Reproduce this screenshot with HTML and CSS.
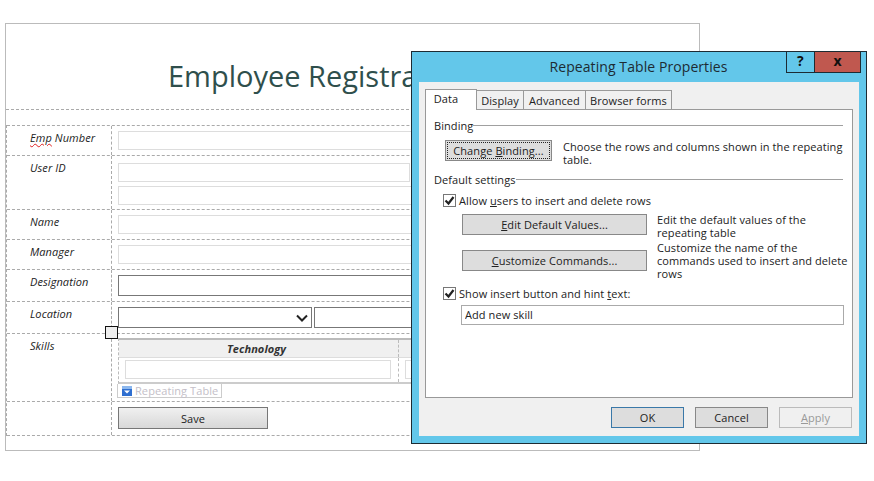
FILE: index.html
```html
<!DOCTYPE html>
<html lang="en">
<head>
  <meta charset="UTF-8">
  <title>Repeating Table Properties</title>
  <link rel="stylesheet" href="styles.css">
</head>
<body>

  <div class="form-page">
    <h1 class="form-title">Employee Registration</h1>
    <div class="form-table">
      <div class="row row-30">
        <div class="label"><span class="misspelled">Emp</span> Number</div>
        <div class="fields"><div class="field"></div></div>
      </div>
      <div class="row row-54">
        <div class="label">User ID</div>
        <div class="fields fields-user">
          <div class="field field-short"></div>
          <div class="field"></div>
        </div>
      </div>
      <div class="row row-30">
        <div class="label">Name</div>
        <div class="fields"><div class="field"></div></div>
      </div>
      <div class="row row-30">
        <div class="label">Manager</div>
        <div class="fields"><div class="field"></div></div>
      </div>
      <div class="row row-32">
        <div class="label">Designation</div>
        <div class="fields"><div class="field field-dark"></div></div>
      </div>
      <div class="row row-32">
        <div class="label">Location</div>
        <div class="fields fields-location">
          <div class="field field-dark field-select">
            <svg class="chevron" width="12" height="8" viewBox="0 0 12 8"><path d="M1 1.5 L6 6.5 L11 1.5" fill="none" stroke="#222" stroke-width="2"/></svg>
          </div>
          <div class="field field-dark field-grow"></div>
        </div>
      </div>
      <div class="row row-68">
        <div class="label">Skills</div>
        <div class="fields fields-skills">
          <div class="handle"></div>
          <div class="repeat-table">
            <div class="repeat-head">
              <div class="repeat-col repeat-col-first">Technology</div>
              <div class="repeat-col"></div>
            </div>
            <div class="repeat-body">
              <div class="repeat-cell repeat-col-first"><div class="field"></div></div>
              <div class="repeat-cell"><div class="field"></div></div>
            </div>
          </div>
          <div class="repeat-tag">
            <svg width="10" height="10" viewBox="0 0 10 10"><rect width="10" height="10" fill="#2f6fd0"/><rect width="10" height="3" fill="#8db8ee"/><path d="M2 4.5 H8 L5 7.5 Z" fill="#fff"/></svg>
            <span>Repeating Table</span>
          </div>
        </div>
      </div>
      <div class="row row-33 row-last">
        <div class="label"></div>
        <div class="fields"><button class="save-btn">Save</button></div>
      </div>
    </div>
  </div>

  <div class="dialog">
    <div class="dialog-bar">
      <div class="dialog-title">Repeating Table Properties</div>
      <div class="win-btn win-help">?</div>
      <div class="win-btn win-close">x</div>
    </div>
    <div class="dialog-body">
      <div class="tabs">
        <div class="tab tab-active">Data</div>
        <div class="tab tab-display">Display</div>
        <div class="tab tab-advanced">Advanced</div>
        <div class="tab tab-browser">Browser forms</div>
      </div>
      <div class="panel">
        <div class="group-head">Binding</div>
        <div class="binding-row">
          <button class="btn btn-focus">Change <u>B</u>inding...</button>
          <p class="hint">Choose the rows and columns shown in the repeating table.</p>
        </div>
        <div class="group-head">Default settings</div>
        <div class="check-row">
          <span class="check"><svg width="11" height="11" viewBox="0 0 11 11"><path d="M1.5 5.5 L4.5 8.5 L9.5 2" fill="none" stroke="#222" stroke-width="2.2"/></svg></span>
          <span>Allow <u>u</u>sers to insert and delete rows</span>
        </div>
        <div class="option-row option-edit">
          <button class="btn btn-wide"><u>E</u>dit Default Values...</button>
          <p class="hint">Edit the default values of the repeating table</p>
        </div>
        <div class="option-row option-custom">
          <button class="btn btn-wide"><u>C</u>ustomize Commands...</button>
          <p class="hint">Customize the name of the commands used to insert and delete rows</p>
        </div>
        <div class="check-row check-show">
          <span class="check"><svg width="11" height="11" viewBox="0 0 11 11"><path d="M1.5 5.5 L4.5 8.5 L9.5 2" fill="none" stroke="#222" stroke-width="2.2"/></svg></span>
          <span>Show insert button and hint <u>t</u>ext:</span>
        </div>
        <input class="hint-input" type="text" value="Add new skill">
      </div>
      <div class="dialog-actions">
        <button class="btn btn-action btn-ok">OK</button>
        <button class="btn btn-action">Cancel</button>
        <button class="btn btn-action btn-disabled"><u>A</u>pply</button>
      </div>
    </div>
  </div>

</body>
</html>
```

FILE: styles.css
```css
body {
  margin: 0;
  background: white;
  font-family: 'Open Sans', 'Noto Sans', sans-serif;
  font-size: 11px;
  letter-spacing: 0.08px;
  color: #222;
  overflow: hidden;
}

/* form behind the dialog */
.form-page {
  box-sizing: border-box;
  width: 695px;
  height: 428px;
  margin: 23px 0 0 5px;
  border: 1px solid #bbb;
}

.form-title {
  box-sizing: border-box;
  height: 86px;
  margin: 0;
  padding: 32px 0 0 162px;
  border-bottom: 1px dashed #aaa;
  font-size: 29px;
  line-height: 40px;
  font-weight: 400;
  letter-spacing: 0;
  color: #2f4f4c;
}

.form-table {
  margin-top: 15px;
  border-left: 1px dashed #aaa;
}

.row {
  box-sizing: border-box;
  display: flex;
  border-top: 1px dashed #aaa;
}

.row-30 { height: 30px; }
.row-32 { height: 32px; }
.row-33 { height: 33px; }
.row-54 { height: 54px; }
.row-68 { height: 68px; }

.row-last {
  box-sizing: content-box;
  border-bottom: 1px dashed #aaa;
}

.label {
  box-sizing: border-box;
  width: 104px;
  padding: 4px 0 0 23px;
  font-style: italic;
  line-height: 16px;
  color: #222;
}

.misspelled {
  text-decoration: underline wavy #e02020 1px;
}

.fields {
  flex: 1;
  padding: 5px 8px 0 6px;
  border-left: 1px dashed #aaa;
  min-width: 0;
}

.fields-user {
  display: flex;
  flex-direction: column;
  gap: 4px;
  padding-top: 7px;
}

.fields-location {
  display: flex;
  gap: 2px;
}

.fields-skills {
  position: relative;
  padding-top: 4px;
}

.field {
  box-sizing: border-box;
  height: 19px;
  border: 1px solid #ddd;
  background: white;
}

.field-short { width: 292px; }

.field-dark {
  height: 21px;
  border-color: #777;
}

.field-select {
  position: relative;
  width: 194px;
}

.field-grow { flex: 1; }

.chevron {
  position: absolute;
  right: 3px;
  top: 6px;
}

.handle {
  position: absolute;
  left: -7px;
  top: -8px;
  box-sizing: border-box;
  width: 13px;
  height: 13px;
  border: 1px solid #111;
  background: #eee;
}

.repeat-table {
  border-top: 2px solid #bbb;
  border-bottom: 2px solid #ccc;
  border-left: 1px dashed #bbb;
}

.repeat-head {
  display: flex;
  height: 17px;
  background: #f0f0f0;
  border-bottom: 1px solid #ddd;
  font-weight: 700;
  font-style: italic;
  text-align: center;
  line-height: 17px;
  color: #333;
}

.repeat-col { flex: 1; }

.repeat-body {
  display: flex;
  height: 24px;
}

.repeat-cell {
  flex: 1;
  padding: 2px 7px 0 6px;
}

.repeat-col-first {
  flex: none;
  box-sizing: border-box;
  width: 280px;
  border-right: 1px dashed #bbb;
}

.repeat-head .repeat-col-first { padding-right: 4px; }

.repeat-tag {
  box-sizing: border-box;
  display: flex;
  align-items: center;
  gap: 3px;
  width: 105px;
  height: 14px;
  margin-left: -1px;
  padding-left: 4px;
  border: 1px solid #ccc;
  border-top: none;
  color: #c4c0c8;
}

.save-btn {
  display: block;
  box-sizing: border-box;
  width: 150px;
  height: 22px;
  margin-top: 0;
  padding: 0;
  border: 1px solid #777;
  background: linear-gradient(to bottom, #f0f0f0, #d8d8d8);
  font: inherit;
  color: #222;
}

/* dialog window */
.dialog {
  position: absolute;
  left: 411px;
  top: 51px;
  box-sizing: border-box;
  width: 456px;
  height: 393px;
  padding: 0 7px 7px;
  border: 1px solid #1d2b33;
  background: #63c7ea;
  display: flex;
  flex-direction: column;
}

.dialog-bar {
  display: flex;
  height: 30px;
  margin-right: -2px;
  flex: none;
}

.dialog-title {
  flex: 1;
  padding: 5px 0 0 72px;
  font-size: 14px;
  line-height: 20px;
  text-align: center;
  color: #1d2b33;
}

.win-btn {
  box-sizing: border-box;
  height: 21px;
  border: 1px solid #1d2b33;
  border-top: none;
  text-align: center;
  font-size: 14px;
  line-height: 17px;
  font-weight: 700;
  color: #111;
}

.win-help { width: 28px; border-right: none; }
.win-close { width: 47px; background: #c0584f; }

.dialog-body {
  flex: 1;
  display: flex;
  flex-direction: column;
  padding: 7px 6px 0;
  background: #f0f0f0;
}

.tabs {
  display: flex;
  align-items: flex-end;
  height: 21px;
  position: relative;
  z-index: 1;
}

.tab {
  box-sizing: border-box;
  height: 19px;
  margin-bottom: 1px;
  padding-top: 2px;
  text-align: center;
  line-height: 15px;
  border: 1px solid #999;
  border-bottom: none;
  border-left: none;
}

.tab-active {
  width: 52px;
  height: 21px;
  margin-bottom: 0;
  padding-top: 1px;
  padding-right: 10px;
  border-left: 1px solid #999;
  background: white;
}

.tab-display { width: 47px; }
.tab-advanced { width: 62px; }
.tab-browser { width: 86px; }

.panel {
  box-sizing: border-box;
  height: 289px;
  margin-top: -1px;
  padding: 7px 9px 0 8px;
  border: 1px solid #999;
  background: white;
}

.group-head {
  display: flex;
  height: 16px;
  line-height: 18px;
}

.group-head::after {
  content: "";
  flex: 1;
  height: 1px;
  margin-top: 8px;
  background: #a0a0a0;
}

.binding-row {
  display: flex;
  gap: 11px;
  height: 31px;
  margin-top: 7px;
  padding-left: 11px;
}

.hint {
  margin: 0;
  line-height: 13px;
}

.btn {
  box-sizing: border-box;
  height: 21px;
  padding: 0;
  border: 1px solid #888;
  background: #ddd;
  font: inherit;
  letter-spacing: inherit;
  color: #222;
}

.btn-focus {
  width: 107px;
  flex: none;
  outline: 1px dotted #222;
  outline-offset: -3px;
}

.check-row {
  display: flex;
  align-items: flex-start;
  gap: 3px;
  height: 14px;
  margin-top: 7px;
  padding-left: 9px;
  line-height: 13px;
}

.check {
  box-sizing: border-box;
  display: flex;
  align-items: center;
  justify-content: center;
  width: 13px;
  height: 13px;
  border: 1px solid #777;
}

.option-row {
  display: flex;
  gap: 10px;
  padding-left: 28px;
}

.option-edit {
  height: 36px;
  margin-top: 6px;
}

.option-edit .hint { margin-top: -1px; }

.option-custom { height: 37px; }

.option-custom .hint {
  margin: -9px -8px 0 0;
}

.check-show { margin-top: 0; }

.btn-wide {
  width: 185px;
  flex: none;
}

.hint-input {
  display: block;
  box-sizing: border-box;
  width: 383px;
  height: 20px;
  margin: 4px 0 0 27px;
  padding: 0 3px 2px;
  border: 1px solid #aaa;
  font: inherit;
  letter-spacing: inherit;
  color: #222;
  outline: none;
}

.dialog-actions {
  display: flex;
  justify-content: flex-end;
  gap: 11px;
  margin: 9px 1px 0 0;
}

.btn-action {
  width: 73px;
}

.btn-ok { border-color: #3a78a8; }

.btn-disabled {
  border-color: #bbb;
  background: #f0f0f0;
  color: #999;
}
```
